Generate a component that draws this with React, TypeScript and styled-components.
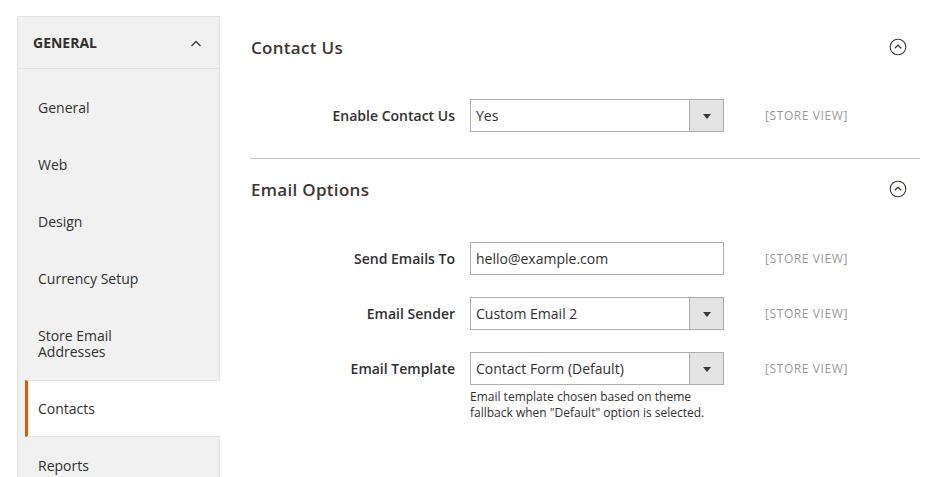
import React from "react";
import styled, { createGlobalStyle } from "styled-components";

const GlobalStyle = createGlobalStyle`
  html, body {
    margin: 0;
    padding: 0;
    background: #fff;
    overflow: hidden;
  }
  body {
    font-family: "Open Sans", "Liberation Sans", sans-serif;
    color: #303030;
  }
`;

const navItems = [
  { label: "General" },
  { label: "Web" },
  { label: "Design" },
  { label: "Currency Setup" },
  { label: "Store Email Addresses" },
  { label: "Contacts", active: true },
  { label: "Reports" },
];

const ChevronUp = () => (
  <svg width="12" height="8" viewBox="0 0 12 8">
    <polyline points="1.5,7 6,2.5 10.5,7" fill="none" stroke="#41362f" strokeWidth="1.3" />
  </svg>
);

const CircleToggle = () => (
  <svg width="18" height="18" viewBox="0 0 18 18">
    <circle cx="9" cy="9" r="7.8" fill="none" stroke="#41362f" strokeWidth="1.1" />
    <polyline points="5.8,10.3 9,7.2 12.2,10.3" fill="none" stroke="#41362f" strokeWidth="1.2" />
  </svg>
);

const App = () => {
  return (
    <Page>
      <GlobalStyle />
      <Sidebar>
        <NavHeader>
          <span>General</span>
          <ChevronUp />
        </NavHeader>
        <NavList>
          {navItems.map((item) => (
            <NavItem key={item.label} $active={item.active}>
              {item.label}
            </NavItem>
          ))}
        </NavList>
      </Sidebar>

      <Main>
        <SectionHeader>
          <SectionTitle>Contact Us</SectionTitle>
          <CircleToggle />
        </SectionHeader>
        <Fieldset $top={40}>
          <Field>
            <Label>Enable Contact Us</Label>
            <Control>
              <Select>
                <SelectValue>Yes</SelectValue>
                <SelectArrow />
              </Select>
            </Control>
            <Scope>[Store View]</Scope>
          </Field>
        </Fieldset>

        <Divider />

        <SectionHeader>
          <SectionTitle>Email Options</SectionTitle>
          <CircleToggle />
        </SectionHeader>
        <Fieldset $top={41}>
          <Field>
            <Label>Send Emails To</Label>
            <Control>
              <Input>hello@example.com</Input>
            </Control>
            <Scope>[Store View]</Scope>
          </Field>
          <Field>
            <Label>Email Sender</Label>
            <Control>
              <Select>
                <SelectValue>Custom Email 2</SelectValue>
                <SelectArrow />
              </Select>
            </Control>
            <Scope>[Store View]</Scope>
          </Field>
          <Field>
            <Label>Email Template</Label>
            <Control>
              <Select>
                <SelectValue>Contact Form (Default)</SelectValue>
                <SelectArrow />
              </Select>
              <Note>
                Email template chosen based on theme fallback when "Default" option is selected.
              </Note>
            </Control>
            <Scope>[Store View]</Scope>
          </Field>
        </Fieldset>
      </Main>
    </Page>
  );
};

const Page = styled.div`
  display: flex;
  align-items: flex-start;
  gap: 30px;
  padding: 16px 18px 0 17px;
  height: 477px;
  box-sizing: border-box;
`;

const Sidebar = styled.nav`
  width: 203px;
  flex-shrink: 0;
  box-sizing: border-box;
  background: #f1f1f1;
  border: 1px solid #e3e3e3;
  border-bottom: none;
`;

const NavHeader = styled.div`
  height: 51px;
  display: flex;
  align-items: center;
  justify-content: space-between;
  padding: 0 17px 0 15px;
  border-bottom: 1px solid #e3e3e3;
  font-size: 14px;
  font-weight: 700;
  text-transform: uppercase;
  color: #303030;
`;

const NavList = styled.div`
  padding-top: 10px;
  display: flex;
  flex-direction: column;
`;

const NavItem = styled.div<{ $active?: boolean }>`
  box-sizing: border-box;
  min-height: 57px;
  display: flex;
  align-items: center;
  padding: 20.5px 40px 20.5px 20px;
  font-size: 14px;
  line-height: 16px;
  color: #303030;
  ${(p) =>
    p.$active &&
    `
    margin-left: 7px;
    margin-right: -1px;
    padding: 19.5px 40px 19.5px 10px;
    background: #fff;
    border-left: 3px solid #eb5202;
    border-top: 1px solid #e3e3e3;
    border-bottom: 1px solid #e3e3e3;
  `}
`;

const Main = styled.main`
  flex: 1;
  padding-top: 19px;
`;

const SectionHeader = styled.div`
  display: flex;
  align-items: center;
  justify-content: space-between;
  height: 24px;
  padding: 0 13px 0 1px;
`;

const SectionTitle = styled.h2`
  margin: 0;
  font-size: 17px;
  font-weight: 600;
  color: #41362f;
  letter-spacing: 0.3px;
`;

const Fieldset = styled.div<{ $top: number }>`
  display: flex;
  flex-direction: column;
  gap: 22px;
  padding-top: ${(p) => p.$top}px;
  padding-bottom: 26px;
`;

const Field = styled.div`
  display: flex;
  align-items: flex-start;
`;

const Label = styled.div`
  width: 205px;
  text-align: right;
  font-size: 14px;
  font-weight: 600;
  line-height: 33px;
  color: #303030;
`;

const Control = styled.div`
  width: 254px;
  margin-left: 15px;
`;

const Select = styled.div`
  height: 33px;
  box-sizing: border-box;
  display: flex;
  border: 1px solid #adadad;
  background: #fff;
`;

const SelectValue = styled.div`
  flex: 1;
  padding-left: 5px;
  font-size: 14px;
  line-height: 31px;
  color: #303030;
`;

const SelectArrow = styled.div`
  width: 33px;
  background: #e3e3e3;
  border-left: 1px solid #adadad;
  position: relative;
  &::after {
    content: "";
    position: absolute;
    left: 13px;
    top: 14px;
    border-left: 4px solid transparent;
    border-right: 4px solid transparent;
    border-top: 5px solid #41362f;
  }
`;

const Input = styled.div`
  height: 33px;
  box-sizing: border-box;
  border: 1px solid #adadad;
  padding-left: 5px;
  font-size: 14px;
  line-height: 31px;
  color: #303030;
`;

const Note = styled.div`
  margin-top: 4px;
  font-size: 12px;
  line-height: 16px;
  color: #303030;
`;

const Scope = styled.div`
  margin-left: 41px;
  font-size: 12px;
  letter-spacing: 0.6px;
  line-height: 33px;
  text-transform: uppercase;
  color: #999;
`;

const Divider = styled.hr`
  margin: 0 0 18px 0;
  border: none;
  border-top: 1px solid #ccc;
`;

export default App;
